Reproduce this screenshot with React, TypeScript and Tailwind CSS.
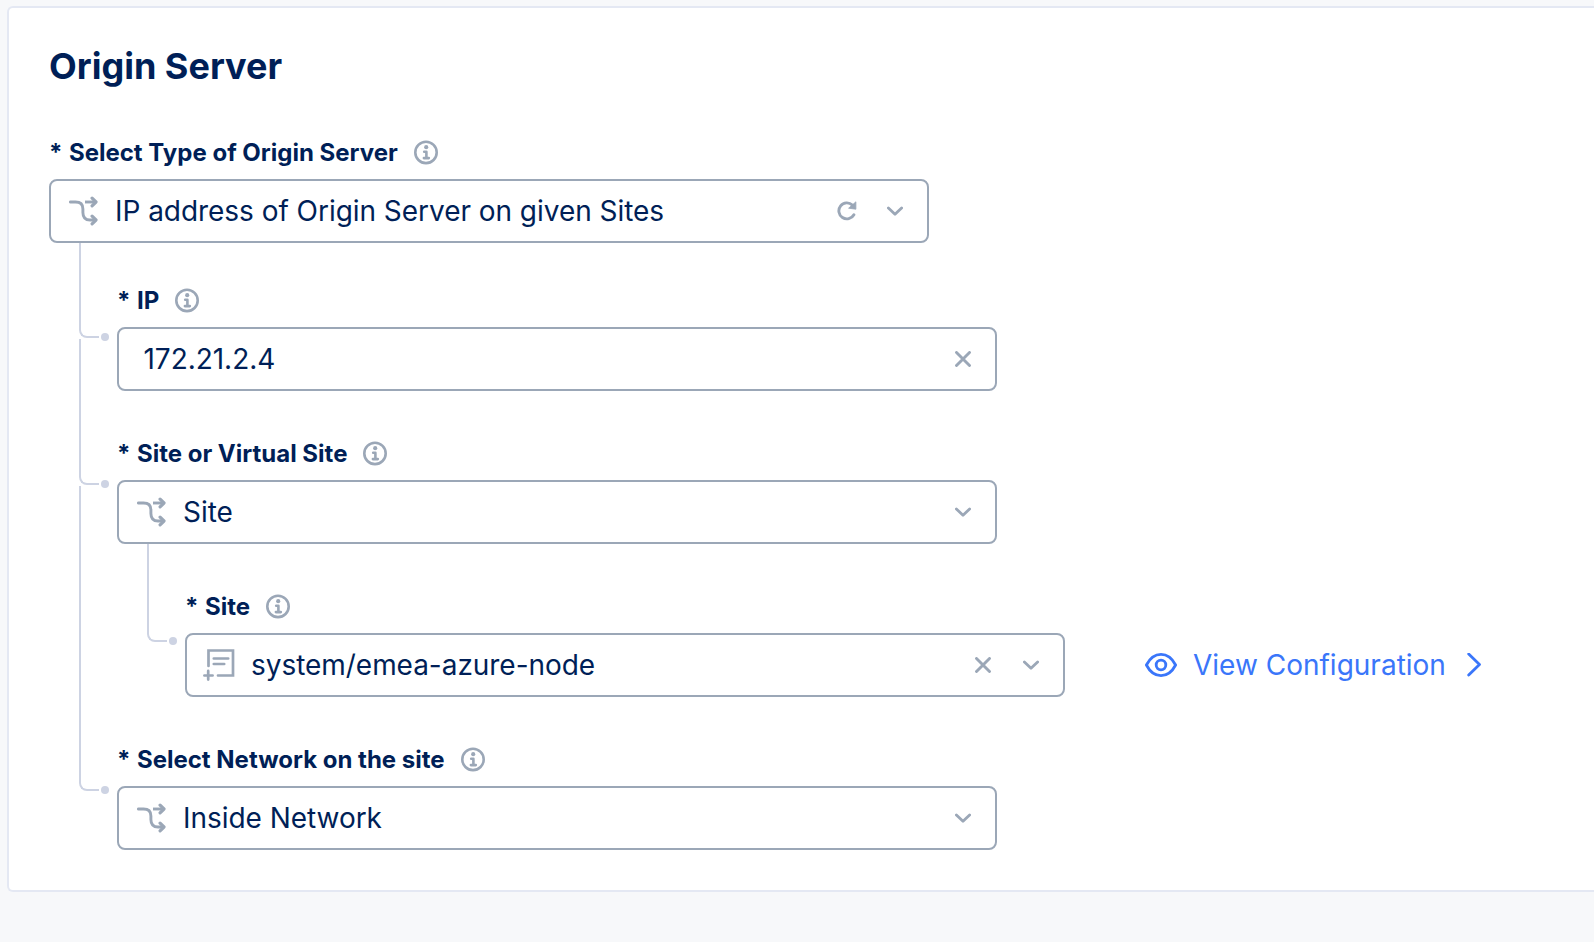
import type { ReactNode } from "react";

function InfoIcon() {
  return (
    <svg width="24" height="24" viewBox="0 0 24 24" fill="none" className="mb-px shrink-0 overflow-visible text-[#9ba7b7]">
      <circle cx="12" cy="12.4" r="10.7" stroke="currentColor" strokeWidth="2.6" />
      <circle cx="12.2" cy="7.2" r="2.1" fill="currentColor" />
      <path d="M10.2 11.7H12.4V17.9M9.9 18.1H14.8" stroke="currentColor" strokeWidth="2.6" strokeLinecap="round" strokeLinejoin="round" />
    </svg>
  );
}

function BranchIcon() {
  return (
    <svg width="29" height="30" viewBox="0 0 29 30" fill="none" stroke="currentColor" strokeWidth="2.9" strokeLinecap="round" strokeLinejoin="round" className="shrink-0">
      <path d="M1.4 6H6.5C11.5 6 13.9 8.6 13.9 12.9V16.5C13.9 21.2 16.2 24 21 24H26" />
      <path d="M16 6H26" strokeLinecap="butt" />
      <path d="M23.1 2.2L27 6L23.1 9.8M23.1 20.2L27 24L23.1 27.8" strokeWidth="3.2" />
    </svg>
  );
}

function ReferenceIcon() {
  return (
    <svg width="32" height="32" viewBox="0 0 32 32" fill="none" stroke="currentColor" strokeWidth="2.7" strokeLinecap="round" className="shrink-0">
      <path d="M5.5 17V1.5H30V26.5H15" />
      <path d="M10.8 9.5H25.2M10.8 15H21.2" />
      <path d="M5.2 21.9V30.6M1.4 26.5H9.6" />
    </svg>
  );
}

function ChevronDown() {
  return (
    <svg width="16" height="16" viewBox="0 0 16 16" fill="none" stroke="currentColor" strokeWidth="2.8" strokeLinecap="round" strokeLinejoin="round">
      <path d="M1.4 5L8 11.3L14.6 5" />
    </svg>
  );
}

function CloseIcon() {
  return (
    <svg width="16" height="16" viewBox="0 0 16 16" fill="none" stroke="currentColor" strokeWidth="2.9" strokeLinecap="round">
      <path d="M1.5 1.5L14.5 14.5M14.5 1.5L1.5 14.5" />
    </svg>
  );
}

function RefreshIcon() {
  return (
    <svg width="20" height="20" viewBox="0 0 20 20" fill="none" className="shrink-0">
      <path d="M16.9 13.7A8 8 0 1 1 15.4 4.1" stroke="currentColor" strokeWidth="2.9" strokeLinecap="round" />
      <path d="M18.9 0.8V8.2L11.6 7.2Z" fill="currentColor" stroke="currentColor" strokeWidth="0.8" strokeLinejoin="round" />
    </svg>
  );
}

function EyeIcon() {
  return (
    <svg width="32" height="24" viewBox="0 0 32 24" fill="none" stroke="currentColor" strokeWidth="2.8" strokeLinejoin="round" className="shrink-0">
      <path d="M1.4 12C4.5 6 10 1.4 16 1.4S27.5 6 30.6 12C27.5 18 22 22.6 16 22.6S4.5 18 1.4 12Z" />
      <circle cx="16" cy="12" r="4.8" />
    </svg>
  );
}

function ChevronRight() {
  return (
    <svg width="15" height="24" viewBox="0 0 15 24" fill="none" stroke="currentColor" strokeWidth="2.8" strokeLinecap="round" strokeLinejoin="round">
      <path d="M1.7 1.1L12.5 11.6L1.7 22.1" />
    </svg>
  );
}

interface FieldProps {
  label: string;
  value: string;
  icon?: ReactNode;
  actions: ReactNode;
}

function Field({ label, value, icon, actions }: FieldProps) {
  return (
    <div className="w-[880px]">
      <div className="mb-[10px] flex h-[33px] items-center text-2xl/[33px] font-bold">
        <span className="mr-[6.5px]">*</span>
        <span className="mr-4">{label}</span>
        <InfoIcon />
      </div>
      <div className="flex h-16 items-center rounded-lg border-2 border-[#9ba7b7] bg-white pr-6 text-[#9ba7b7]">
        {icon ? <span className="flex w-16 pl-[18px]">{icon}</span> : <span className="w-[24.5px]" />}
        <span className="grow text-[28px] tracking-[-0.04px] text-[#001f57]">{value}</span>
        <span className="flex items-center gap-8">{actions}</span>
      </div>
    </div>
  );
}

function Connector({ className }: { className: string }) {
  return (
    <div className={`flex items-end gap-0.5 ${className}`}>
      <div className="h-full w-5 rounded-bl-lg border-b-2 border-l-2 border-[#cdd3e3]" />
      <div className="-mb-[3px] size-2 rounded-full bg-[#cdd3e3]" />
    </div>
  );
}

export default function App() {
  return (
    <div className="h-[942px] w-full overflow-hidden bg-[#f7f8fa] pt-[6px] pl-[7px] font-['Inter',sans-serif] text-[#001f57]">
      <section className="h-[886px] rounded-l-md border-2 border-r-0 border-[#e4e8f3] bg-white pt-[34px] pl-10">
        <h1 className="mb-[46px] h-12 text-4xl/[48px] font-bold">Origin Server</h1>
        <Field
          label="Select Type of Origin Server"
          value="IP address of Origin Server on given Sites"
          icon={<BranchIcon />}
          actions={
            <>
              <span className="-mx-0.5 flex"><RefreshIcon /></span>
              <ChevronDown />
            </>
          }
        />
        <div className="flex">
          <div className="flex w-[68px] flex-col gap-px pl-[30px]">
            <Connector className="h-[95px]" />
            <Connector className="h-[146px]" />
            <Connector className="h-[305px]" />
          </div>
          <div className="pt-[41px]">
            <Field label="IP" value="172.21.2.4" actions={<CloseIcon />} />
            <div className="pt-[46px]">
              <Field label="Site or Virtual Site" value="Site" icon={<BranchIcon />} actions={<ChevronDown />} />
            </div>
            <div className="flex">
              <div className="w-[68px] pl-[30px]">
                <Connector className="h-[98px]" />
              </div>
              <div className="flex items-end pt-[46px]">
                <Field
                  label="Site"
                  value="system/emea-azure-node"
                  icon={<span className="-ml-0.5 flex"><ReferenceIcon /></span>}
                  actions={
                    <>
                      <CloseIcon />
                      <ChevronDown />
                    </>
                  }
                />
                <a className="ml-20 flex h-16 items-center text-[28px] text-[#3a76fa]">
                  <EyeIcon />
                  <span className="mr-6 ml-4 w-[250px] whitespace-nowrap">View Configuration</span>
                  <ChevronRight />
                </a>
              </div>
            </div>
            <div className="pt-[46px]">
              <Field label="Select Network on the site" value="Inside Network" icon={<BranchIcon />} actions={<ChevronDown />} />
            </div>
          </div>
        </div>
      </section>
    </div>
  );
}
